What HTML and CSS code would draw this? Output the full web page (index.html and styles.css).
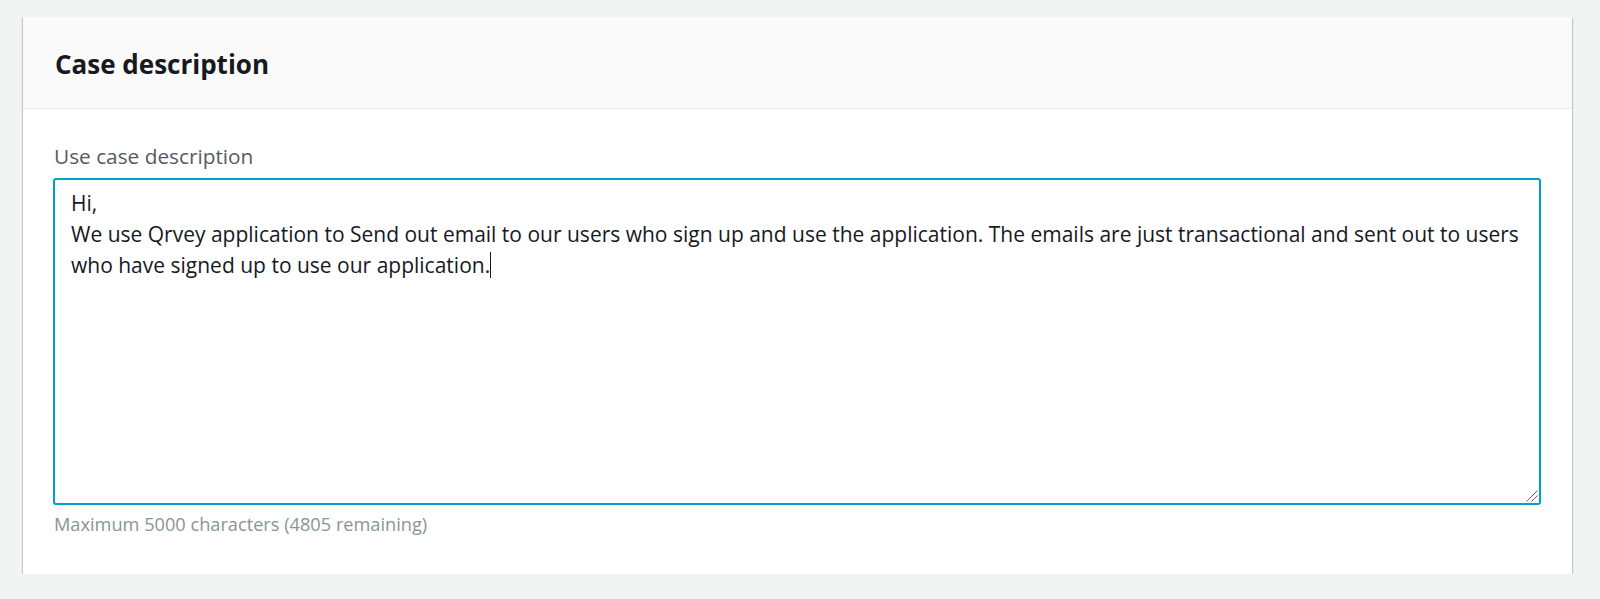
FILE: index.html
```html
<!DOCTYPE html>
<html lang="en">
<head>
<meta charset="utf-8">
<title>Case description</title>
<link rel="stylesheet" href="styles.css">
</head>
<body>
<div class="page">
  <section class="card">
    <header class="card-header">
      <h2 class="card-title">Case description</h2>
    </header>
    <div class="card-body">
      <label class="field-label">Use case description</label>
      <div class="textarea" role="textbox" aria-multiline="true">
        <div class="line">Hi,</div>
        <div class="line">We use Qrvey application to Send out email to our users who sign up and use the application. The emails are just transactional and sent out to users who have signed up to use our application.<span class="caret"></span></div>
        <svg class="grip" width="12" height="12" viewBox="0 0 12 12" aria-hidden="true">
          <line x1="0.5" y1="11.5" x2="11.5" y2="0.5" stroke="#5f6368" stroke-width="1"/>
          <line x1="5.5" y1="11.5" x2="11.5" y2="5.5" stroke="#5f6368" stroke-width="1"/>
        </svg>
      </div>
      <div class="hint">Maximum 5000 characters (4805 remaining)</div>
    </div>
  </section>
</div>
</body>
</html>
```

FILE: styles.css
```css
html, body {
  margin: 0;
  padding: 0;
  background: #f2f3f3;
  font-family: "Open Sans", "Noto Sans", Arial, sans-serif;
}

.page {
  padding: 17px 28px 0 23px;
}

.card {
  background: #ffffff;
  box-shadow: 0 1px 1px 0 rgba(0, 28, 36, 0.3), 1px 1px 1px 0 rgba(0, 28, 36, 0.15), -1px 1px 1px 0 rgba(0, 28, 36, 0.15);
}

.card-header {
  background: #fafafa;
  border-bottom: 1px solid #eaeded;
  padding: 30px 32px 27px;
}

.card-title {
  margin: 0;
  font-size: 26px;
  line-height: 34px;
  font-weight: 700;
  color: #16191f;
}

.card-body {
  padding: 33px 31px 38px 30px;
}

.field-label {
  display: block;
  font-size: 20.8px;
  line-height: 28px;
  color: #545b64;
  padding-left: 1px;
  margin-bottom: 8px;
}

.textarea {
  position: relative;
  height: 327px;
  box-sizing: border-box;
  border: 2px solid #00a1c9;
  border-radius: 3px;
  padding: 8px 6px 5px 16px;
  font-size: 21px;
  line-height: 31px;
  color: #16191f;
}

.caret {
  display: inline-block;
  width: 1px;
  height: 26px;
  background: #16191f;
  vertical-align: -5px;
}

.grip {
  position: absolute;
  right: 1px;
  bottom: 1px;
}

.hint {
  margin-top: 7px;
  padding-left: 1px;
  font-size: 18.2px;
  line-height: 24px;
  color: #879596;
}
```
